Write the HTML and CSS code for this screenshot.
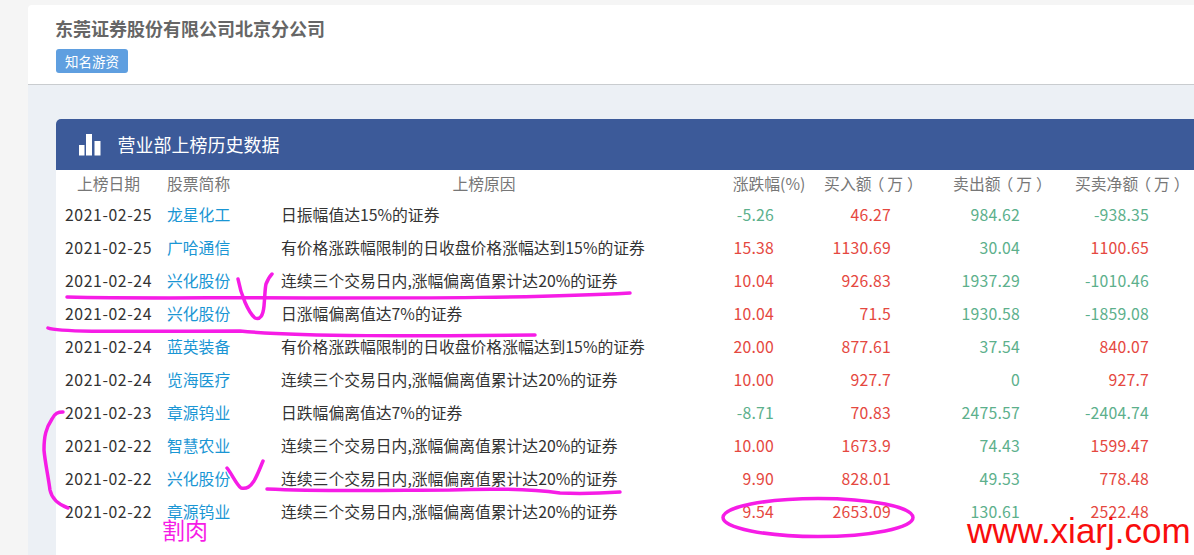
FILE: index.html
```html
<!DOCTYPE html>
<html lang="zh-CN">
<head>
<meta charset="utf-8">
<title>营业部上榜历史数据</title>
<link rel="stylesheet" href="styles.css">
</head>
<body>
<div class="card">
  <header class="head">
    <h1 class="title">东莞证券股份有限公司北京分公司</h1>
    <span class="tag">知名游资</span>
  </header>
  <main class="content">
    <section class="panel">
      <div class="panel-head">
        <svg class="bars" width="23" height="22" viewBox="0 0 23 22"><path fill="#fff" d="M1 11h5.500v10.500H1zM8 0h6v21.500H8zM16.500 7h6v14.500h-6z"/></svg>
        <h2 class="panel-title">营业部上榜历史数据</h2>
      </div>
      <table class="grid">
        <colgroup><col class="c1"><col class="c2"><col class="c3"><col class="c4"><col class="c5"><col class="c6"><col class="c7"><col></colgroup>
        <thead>
          <tr><th>上榜日期</th><th class="th-name">股票简称</th><th class="th-reason">上榜原因</th><th>涨跌幅(%)</th><th class="th-amt">买入额<span class="pl">（</span>万<span class="pr">）</span></th><th class="th-amt">卖出额<span class="pl">（</span>万<span class="pr">）</span></th><th>买卖净额<span class="pl">（</span>万<span class="pr">）</span></th><th></th></tr>
        </thead>
        <tbody>
          <tr><td>2021-02-25</td><td><a>龙星化工</a></td><td>日振幅值达15%的证券</td><td class="dn">-5.26</td><td class="up">46.27</td><td class="dn">984.62</td><td class="dn">-938.35</td><td></td></tr>
          <tr><td>2021-02-25</td><td><a>广哈通信</a></td><td>有价格涨跌幅限制的日收盘价格涨幅达到15%的证券</td><td class="up">15.38</td><td class="up">1130.69</td><td class="dn">30.04</td><td class="up">1100.65</td><td></td></tr>
          <tr><td>2021-02-24</td><td><a>兴化股份</a></td><td>连续三个交易日内,涨幅偏离值累计达20%的证券</td><td class="up">10.04</td><td class="up">926.83</td><td class="dn">1937.29</td><td class="dn">-1010.46</td><td></td></tr>
          <tr><td>2021-02-24</td><td><a>兴化股份</a></td><td>日涨幅偏离值达7%的证券</td><td class="up">10.04</td><td class="up">71.5</td><td class="dn">1930.58</td><td class="dn">-1859.08</td><td></td></tr>
          <tr><td>2021-02-24</td><td><a>蓝英装备</a></td><td>有价格涨跌幅限制的日收盘价格涨幅达到15%的证券</td><td class="up">20.00</td><td class="up">877.61</td><td class="dn">37.54</td><td class="up">840.07</td><td></td></tr>
          <tr><td>2021-02-24</td><td><a>览海医疗</a></td><td>连续三个交易日内,涨幅偏离值累计达20%的证券</td><td class="up">10.00</td><td class="up">927.7</td><td class="dn">0</td><td class="up">927.7</td><td></td></tr>
          <tr><td>2021-02-23</td><td><a>章源钨业</a></td><td>日跌幅偏离值达7%的证券</td><td class="dn">-8.71</td><td class="up">70.83</td><td class="dn">2475.57</td><td class="dn">-2404.74</td><td></td></tr>
          <tr><td>2021-02-22</td><td><a>智慧农业</a></td><td>连续三个交易日内,涨幅偏离值累计达20%的证券</td><td class="up">10.00</td><td class="up">1673.9</td><td class="dn">74.43</td><td class="up">1599.47</td><td></td></tr>
          <tr><td>2021-02-22</td><td><a>兴化股份</a></td><td>连续三个交易日内,涨幅偏离值累计达20%的证券</td><td class="up">9.90</td><td class="up">828.01</td><td class="dn">49.53</td><td class="up">778.48</td><td></td></tr>
          <tr><td>2021-02-22</td><td><a>章源钨业</a></td><td>连续三个交易日内,涨幅偏离值累计达20%的证券</td><td class="up">9.54</td><td class="up">2653.09</td><td class="dn">130.61</td><td class="up">2522.48</td><td></td></tr>
        </tbody>
      </table>
    </section>
  </main>
</div>
<svg class="ink" width="1194" height="555" viewBox="0 0 1194 555">
  <g fill="none" stroke="#f61ce6" stroke-width="3.500" stroke-linecap="round" stroke-linejoin="round">
    <path d="M67 297C150 299 230 297 320 298C420 298 540 298 630 293"/>
    <path d="M48 328C60 333 150 331 240 331C300 337 420 336 535 335"/>
    <path d="M238 279C241 295 248 312 255 318C260 320 263 316 264 306C265 295 265 288 266 284C268 279 270 276 272 274"/>
    <path d="M63 412C58 412 55 413 52 419C46 428 44 436 44 450C45 462 48 475 50 490C52 500 60 505 68 508"/>
    <path d="M227 468C232 474 236 484 241 488C247 489 250 487 254 481C258 474 260 468 263 461"/>
    <path d="M267 489C330 492 400 490 450 490C500 488 530 489 560 493C585 494 605 493 620 492"/>
    <ellipse cx="818" cy="517.500" rx="95" ry="19"/>
  </g>
</svg>
<span class="note">割肉</span>
<span class="mark">www.xiarj.com</span>
</body>
</html>
```

FILE: styles.css
```css
html, body {
  margin: 0;
  height: 555px;
  overflow: hidden;
}
body {
  background: #f5f5f5;
  font-family: "Noto Sans CJK SC", "Liberation Sans", sans-serif;
  padding-top: 5px;
  box-sizing: border-box;
  position: relative;
}
.card {
  margin-left: 28px;
  background: #fff;
  border-top-left-radius: 4px;
  height: 550px;
  display: flex;
  flex-direction: column;
}
.head {
  height: 80px;
  box-sizing: border-box;
  border-bottom: 1px solid #c9cccf;
  padding: 11px 28px 0;
}
.title {
  margin: 0 0 0 -1px;
  font-size: 18px;
  line-height: 24px;
  font-weight: 700;
  color: #666;
}
.tag {
  display: block;
  width: 72px;
  height: 24px;
  margin-top: 9px;
  border-radius: 3px;
  background: #5f9fe0;
  color: #fff;
  font-size: 13.500px;
  line-height: 24px;
  text-align: center;
}
.content {
  flex: 1;
  background: #ecf0f5;
  padding: 34px 0 0 28px;
  min-height: 0;
}
.panel {
  background: #fff;
  border-top-left-radius: 5px;
  height: 100%;
}
.panel-head {
  height: 51px;
  background: #3c5a99;
  display: flex;
  align-items: center;
  gap: 16.500px;
  padding-left: 22px;
  border-top-left-radius: 5px;
}
.bars {
  display: block;
}
.panel-title {
  margin: 0;
  font-size: 18px;
  font-weight: 400;
  color: #fff;
  line-height: 51px;
}
.grid {
  table-layout: fixed;
  width: 100%;
  border-collapse: collapse;
  font-size: 15.800px;
  color: #333;
}
.c1 { width: 105px; }
.c2 { width: 114px; }
.c3 { width: 446px; }
.c4 { width: 96px; }
.c5 { width: 105px; }
.c6 { width: 153px; }
.c7 { width: 107px; }
.grid th {
  height: 28px;
  box-sizing: border-box;
  padding: 0 0 2px;
  font-weight: 400;
  color: #777;
  text-align: center;
  white-space: nowrap;
}
.grid th.th-name {
  text-align: left;
  padding-left: 6px;
}
.grid th.th-reason {
  padding-right: 28px;
}
.grid th.th-amt {
  padding-left: 4px;
}
.pl {
  margin: 0 3px 0 -3px;
}
.pr {
  margin: 0 -4px 0 4px;
}
.grid td {
  height: 33px;
  padding: 0;
  white-space: nowrap;
}
.grid td:nth-child(1) {
  text-align: center;
  letter-spacing: 0.600px;
}
.grid td:nth-child(2) {
  padding-left: 6px;
}
.grid td:nth-child(3) {
  padding-left: 6px;
}
.grid td:nth-child(4) { text-align: right; padding-right: 43px; }
.grid td:nth-child(5) { text-align: right; padding-right: 31px; }
.grid td:nth-child(6) { text-align: right; padding-right: 55px; }
.grid td:nth-child(7) { text-align: right; padding-right: 33px; }
.grid a { color: #1a96d4; }
.up { color: #e5483f; letter-spacing: 0.200px; }
.dn { color: #5cb08c; letter-spacing: 0.200px; }
.ink {
  position: absolute;
  left: 0;
  top: 0;
  pointer-events: none;
}
.note {
  position: absolute;
  left: 162px;
  top: 514px;
  font-size: 23px;
  line-height: 30px;
  color: #f61ce6;
}
.mark {
  position: absolute;
  left: 967px;
  top: 513px;
  font-family: "Liberation Sans", Arial, sans-serif;
  font-size: 35px;
  line-height: 36px;
  color: #f80d0d;
}
```
